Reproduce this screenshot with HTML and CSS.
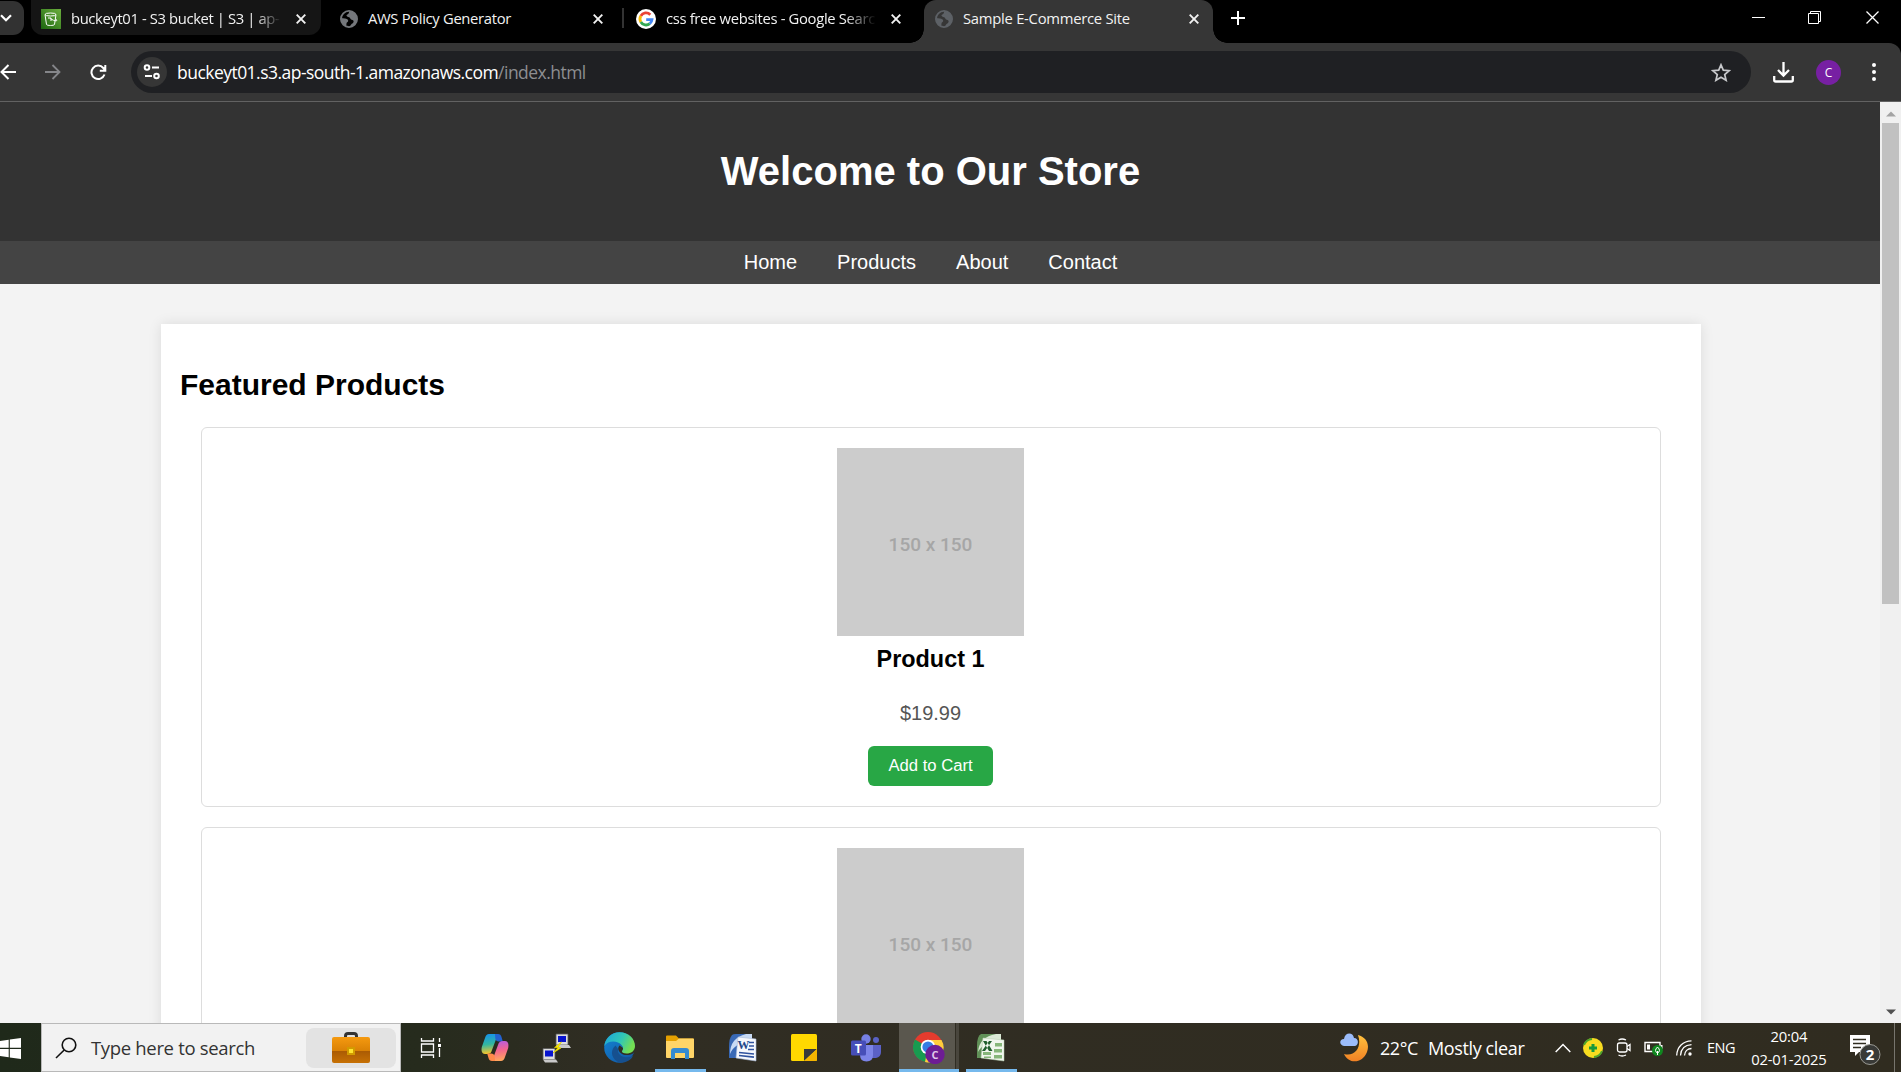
FILE: index.html
```html
<!DOCTYPE html>
<html lang="en">
<head>
<meta charset="utf-8">
<title>Sample E-Commerce Site</title>
<link rel="stylesheet" href="styles.css">
</head>
<body>
<svg class="defs" aria-hidden="true">
  <symbol id="close" viewBox="0 0 10 10"><path d="M.7.7l8.6 8.6M9.3.7L.7 9.3" stroke="currentColor" stroke-width="1.9" fill="none"/></symbol>
  <symbol id="globe" viewBox="0 0 18 18"><circle cx="9" cy="9" r="8.1" fill="none" stroke="currentColor" stroke-width="1.8"/><path d="M9.5 1c-1 1.5-.2 2.5-1.700 3.200S6 5.500 7.200 6.500 10 7 10.300 8.500s2.200 1 3 2 .2 2.500-1.800 3.500L9.500 17C14 17 17 13.500 17 9S14 1 9.500 1zM1 8l4 .5c1.500.2 3.500 1 3.200 2.500S6.500 12 6.500 13.500 6 16 6 16.500C3 15.500 1 12.500 1 8z" fill="currentColor"/></symbol>
</svg>
<div class="screen">
  <div class="tabs">
    <div class="tab-search"><svg width="12" height="8" viewBox="0 0 12 8"><path d="M1 1.300l5 5 5-5" fill="none" stroke="#fff" stroke-width="2.200"/></svg></div>
    <div class="tab tab-hover">
      <svg width="20" height="20" viewBox="0 0 20 20"><defs><linearGradient id="s3" x2="1" y1="1" y2="0"><stop stop-color="#1b660f"/><stop offset="1" stop-color="#6cae3e"/></linearGradient></defs><path fill="url(#s3)" d="M0 0h20v20H0z"/><g fill="none" stroke="#fff"><ellipse cx="9.500" cy="5.500" rx="5.500" ry="1.500"/><path d="M4 5.500l1.500 10c.6 1.300 7.400 1.300 8 0L15 5.500M9.500 9.500c2 1.500 4 2.500 6 2.300.8-.8-.3-1.500-1.200-1.800M7 9h3v3"/></g></svg>
      <span class="title t1">buckeyt01 - S3 bucket | S3 | ap-</span>
      <svg class="x"><use href="#close"/></svg>
    </div>
    <div class="tab tab-aws">
      <svg class="globe"><use href="#globe"/></svg>
      <span class="title t2">AWS Policy Generator</span>
      <svg class="x"><use href="#close"/></svg>
    </div>
    <i class="tab-divider"></i>
    <div class="tab tab-google">
      <svg width="20" height="20" viewBox="0 0 20 20"><circle cx="10" cy="10" r="10" fill="#fff"/><g fill="none" stroke-width="2.800"><path d="M14.300 5.700A6 6 0 0 0 4.800 7" stroke="#ea4335"/><path d="M4.800 7a6 6 0 0 0 0 6" stroke="#fbbc05"/><path d="M4.800 13a6 6 0 0 0 9 1.600" stroke="#34a853"/><path d="M13.800 14.600A6 6 0 0 0 16 10.600h-5.800" stroke="#4285f4"/></g></svg>
      <span class="title t3">css free websites - Google Searc</span>
      <svg class="x"><use href="#close"/></svg>
    </div>
    <div class="tab tab-active">
      <svg class="globe"><use href="#globe"/></svg>
      <span class="title t4">Sample E-Commerce Site</span>
      <svg class="x"><use href="#close"/></svg>
    </div>
    <svg class="plus" width="14" height="14" viewBox="0 0 14 14"><path d="M7 0v14M0 7h14" stroke="#fff" stroke-width="2"/></svg>
    <svg class="window-controls" width="128" height="14" viewBox="0 0 128 14" fill="none" stroke="#fff"><path d="M0 6.500h13M56.500 2.500h10v10h-10zM58.500 2.500v-2h10v10h-2"/><path d="M114.500.5l12 12M126.500.5l-12 12" stroke-width="1.300"/></svg>
  </div>
  <div class="toolbar">
    <svg width="17" height="16" viewBox="0 0 17 16" fill="none" stroke="#fff" stroke-width="2"><path d="M16 8H2M8.500 1L1.500 8l7 7"/></svg>
    <svg class="forward" width="16" height="16" viewBox="0 0 16 16" fill="none" stroke="#85868a" stroke-width="1.800"><path d="M0 8h14M7.500 1l7 7-7 7"/></svg>
    <svg class="reload" width="17" height="17" viewBox="0 0 17 17" fill="none" stroke="#fff" stroke-width="2"><path d="M14.500 10.500A6.700 6.700 0 1 1 13.300 4L15 6M15.300 1v5.700H9.800"/></svg>
    <div class="omnibox">
      <div class="site-info"><svg width="18" height="16" viewBox="0 0 18 16" fill="none" stroke="#fff" stroke-width="2"><circle cx="4" cy="3.500" r="2.300"/><path d="M9 3.500h7M2 12h7"/><circle cx="13.500" cy="12" r="2.300"/></svg></div>
      <span class="url">buckeyt01.s3.ap-south-1.amazonaws.com<span class="path">/index.html</span></span>
      <svg class="star" width="20" height="19" viewBox="0 0 20 19"><path d="M10 1.800l2.300 5.400 5.900.5-4.500 3.800 1.400 5.800-5.100-3.100-5.100 3.100 1.400-5.800L1.800 7.700l5.900-.5z" fill="none" stroke="#c7c8cb" stroke-width="1.700"/></svg>
    </div>
    <svg class="download" width="21" height="21" viewBox="0 0 21 21" fill="none" stroke="#fff" stroke-width="2.300"><path d="M10.500 0v13M5 8l5.500 5.500L16 8M1.200 14v4q0 1.500 1.500 1.500h15.600q1.500 0 1.500-1.500v-4"/></svg>
    <div class="avatar">C</div>
    <svg class="menu" width="4" height="18" viewBox="0 0 4 18" fill="#fff"><circle cx="2" cy="2" r="2"/><circle cx="2" cy="9" r="2"/><circle cx="2" cy="16" r="2"/></svg>
  </div>
  <div class="viewport">
    <div class="page">
      <header><h1>Welcome to Our Store</h1></header>
      <nav><a>Home</a><a>Products</a><a>About</a><a>Contact</a></nav>
      <main class="container">
        <h2>Featured Products</h2>
        <article class="card">
          <div class="image">150 x 150</div>
          <h3>Product 1</h3>
          <p class="price">$19.99</p>
          <button>Add to Cart</button>
        </article>
        <article class="card">
          <div class="image">150 x 150</div>
        </article>
      </main>
    </div>
    <div class="scrollbar">
      <svg width="10" height="6" viewBox="0 0 10 6"><path d="M0 5.500L5 .5l5 5z" fill="#a3a3a3"/></svg>
      <i class="thumb"></i>
      <svg class="down" width="10" height="6" viewBox="0 0 10 6"><path d="M0 .5l5 5 5-5z" fill="#505050"/></svg>
    </div>
  </div>
  <div class="taskbar">
    <div class="start"><svg width="21" height="21" viewBox="0 0 21 21" fill="#fff"><path d="M0 3l8.700-1.300v8.100H0zM9.800 1.500L21 0v9.800H9.800zM0 11h8.700v8.200L0 18zM9.800 11H21v10L9.800 19.400z"/></svg></div>
    <div class="search">
      <svg width="22" height="22" viewBox="0 0 22 22" fill="none" stroke="#111" stroke-width="1.600"><circle cx="14" cy="8" r="6.800"/><path d="M9.200 13L1 21"/></svg>
      <span>Type here to search</span>
      <div class="highlight"><svg width="38" height="32" viewBox="0 0 38 32"><defs><linearGradient id="case" x2="0" y2="1"><stop stop-color="#f59a10"/><stop offset=".52" stop-color="#db8205"/><stop offset=".54" stop-color="#aa5b04"/><stop offset="1" stop-color="#c77104"/></linearGradient></defs><path d="M13.500 6V4q0-2.500 2.500-2.500h6Q24.500 1.500 24.500 4v2" fill="none" stroke="#333" stroke-width="3"/><rect y="5" width="38" height="26" rx="2" fill="url(#case)"/><path fill="#d39b00" d="M15 15h8v8h-8z"/><path fill="#ffe32e" d="M17 17h4v4h-4z"/></svg></div>
    </div>
    <div class="apps">
      <div class="app"><svg width="22" height="20" viewBox="0 0 22 20" fill="none" stroke="#fff" stroke-width="1.300"><path d="M1.500 0v3h12V0M1.500 20v-3h12v3M1.500 6h12v8h-12zM19.500 0v4M19.500 10v9"/><path d="M18 6h3v3h-3z" fill="#fff" stroke="none"/></svg></div>
      <div class="app nudge"><svg width="28" height="27" viewBox="0 0 28 27"><defs><linearGradient id="cp1" x2=".1" y2="1"><stop stop-color="#1590ee"/><stop offset=".55" stop-color="#32b7a0"/><stop offset="1" stop-color="#f2c52e"/></linearGradient><linearGradient id="cp2" x2=".1" y2="1"><stop stop-color="#b45be6"/><stop offset=".5" stop-color="#f4668e"/><stop offset="1" stop-color="#ffa45e"/></linearGradient></defs><path d="M8 0h9L11 16c-1 3-2 4-5 4H4C1 20 0 17 .8 13L4 4c.8-2.500 2-4 4-4z" fill="url(#cp1)"/><path d="M14 0h3c2 0 3 1 3.500 3l1.300 4.500h-4c-2 0-3-1-3.500-3z" fill="#2361cf"/><path d="M20 27h-9l6-16c1-3 2-4 5-4h2c3 0 4 3 3.200 7L24 23c-.8 2.500-2 4-4 4z" fill="url(#cp2)"/><path d="M14 27h-3c-2 0-3-1-3.500-3l-1.300-4.500h4c2 0 3 1 3.500 3z" fill="#ff8a4a"/></svg></div>
      <div class="app nudge"><svg width="30" height="30" viewBox="0 0 30 30"><g id="pc"><path d="M14 1h12v11H14z" fill="#ddd" stroke="#555" stroke-width=".8"/><path d="M16 3h8v6h-8z" fill="#0713cd"/><path d="M14 12h13l2 3H16z" fill="#c9c9c9"/></g><use href="#pc" x="-13" y="14.500"/><path d="M19.500 9l-7 5.500 3.500.3-5 5.200 8-5-3-.7z" fill="#ffed00" stroke="#e3d100" stroke-width=".7"/></svg></div>
      <div class="app nudge"><svg width="31" height="31" viewBox="0 0 31 31"><defs><linearGradient id="e1" x2="1" y2=".4"><stop stop-color="#1ba4dd"/><stop offset=".6" stop-color="#31c8b5"/><stop offset="1" stop-color="#74de52"/></linearGradient><linearGradient id="e2" x2=".8" y2="1"><stop stop-color="#1286d8"/><stop offset="1" stop-color="#1358a2"/></linearGradient></defs><circle cx="15.500" cy="15.500" r="15.300" fill="url(#e2)"/><path d="M11.500 13.500C5 19 8 28 16 30.700 22 31 27 28 29 24c-6 3-16 1-15-7z" fill="#16508f"/><path d="M15.500 13.500c-2 2-1.500 5 .5 7 3 3 8 3.500 13 1l2-2v-4.500l-9 3z" fill="#302d24"/><path d="M.3 14C1.500 5.500 8 .2 15.500.2 25 .2 31 7 31 14c0 5-4 7.500-8.500 7.500-3 0-5-1-4.500-2.500 1.500-1.500 1.500-4-.5-6C14 8.500 4 8 .3 14z" fill="url(#e1)"/></svg></div>
      <div class="app running"><svg width="28" height="25" viewBox="0 0 28 25"><path d="M0 1.500Q0 .5 1 .5h9l3 3h14q1 0 1 1V22H0z" fill="#e5a000"/><path d="M0 6h10l3-2.500h14q1 0 1 1V22q0 1-1 1H1q-1 0-1-1z" fill="#ffd568"/><path d="M5 24v-8q0-3 3-3h12q3 0 3 3v8h-4v-6H9v6z" fill="#368bd0"/></svg></div>
      <div class="app"><svg width="29" height="29" viewBox="0 0 29 29"><path d="M4 2Q5 1 8 1h16v24H1V14Q1 5 4 2z" fill="#3969b5"/><path d="M2 21Q2 5 18 1h6v6Q6 10 2 21z" fill="#c8daf4"/><path d="M10 4l18 2v22L8 25z" fill="#f6f8fc" stroke="#a9bbd8" stroke-width=".6"/><path d="M21 9.500h5M21 13h5M20 16.500h6M11 19.500l15 1.500M11 22.500l15 1.700" stroke="#2f529e" stroke-width="1.700"/><text x="9.500" y="16" class="word-letter">W</text></svg></div>
      <div class="app"><svg width="26" height="27" viewBox="0 0 26 27"><rect width="26" height="27" rx="1.500" fill="#ffd800"/><path d="M13 15h13L13 27z" fill="#39393b"/><path d="M26 15v10.500q0 1.500-1.500 1.500H13z" fill="#f4b400"/></svg></div>
      <div class="app"><svg width="30" height="28" viewBox="0 0 30 28"><circle cx="15" cy="5" r="4.700" fill="#7680e4"/><circle cx="25" cy="6" r="3" fill="#5962c5"/><path d="M20 11h10v7q0 5-5 6h-5z" fill="#5b61c7"/><path d="M9 11h13v10q0 6.500-6.500 6.500T9 21z" fill="#7c84e8"/><rect y="6.500" width="15" height="15" rx="1.500" fill="#464eb8"/><text x="3.700" y="18.500" class="teams-letter">T</text></svg></div>
      <div class="app running selected"><svg width="32" height="32" viewBox="0 0 32 32"><circle cx="15" cy="15" r="15" fill="#e43b2e"/><path d="M15 15L2 7.500A15 15 0 0 0 13 30z" fill="#189b50"/><path d="M15 15l-3 15A15 15 0 0 0 28.500 8H15z" fill="#ffcd3c"/><circle cx="15" cy="15" r="7.300" fill="#fff"/><circle cx="15" cy="15" r="5.600" fill="#367de4"/><circle cx="22" cy="22.500" r="9.700" fill="#6d1d94"/><text x="22" y="26.500" text-anchor="middle" class="chrome-letter">C</text></svg></div>
      <div class="app running"><svg width="29" height="29" viewBox="0 0 29 29"><path d="M5 1h20v24H1V13Q1 3 5 1z" fill="#619158"/><path d="M2 19Q3 4 20 1h5v7Q7 9 2 19z" fill="#dbead6"/><path d="M7 5l21 2v21L5 25z" fill="#f0f6ed" stroke="#b4ceae" stroke-width=".5"/><path d="M19 10h7v3.500h-7zM18 16h8v3.500h-8zM7 19h8v3H7zM18 22h8v3.500h-8zM8 23.500h7V25H8z" fill="#86b67a"/><path d="M7 8h3.500l6 10H13zM16 8h-3L6 18h3z" fill="#205e2c"/></svg></div>
    </div>
    <div class="weather">
      <svg width="30" height="30" viewBox="0 0 30 30"><defs><linearGradient id="moon" x2="0" y2="1"><stop stop-color="#ffc13d"/><stop offset="1" stop-color="#f18124"/></linearGradient></defs><path d="M18 2c8 2 12 9 9 17C23 30 9 32 4 21c12 3 18-8 14-19z" fill="url(#moon)"/><path d="M4 13C-1 12-1 6 4 6 5-1 13-1 14 5c5 0 5 7 1 8z" fill="#9bbcfa"/></svg>
      <span class="temp">22°C</span><span class="sky">Mostly clear</span>
    </div>
    <div class="tray">
      <svg width="16" height="10" viewBox="0 0 16 10"><path d="M.7 9L8 1.500 15.300 9" fill="none" stroke="#fff" stroke-width="1.500"/></svg>
      <svg class="shield" width="20" height="20" viewBox="0 0 20 20"><circle cx="10" cy="10" r="10" fill="#f8dc20"/><path d="M1 7a9.500 9.500 0 0 1 8-6M19 13a9.500 9.500 0 0 1-8 6" fill="none" stroke="#4ea42c" stroke-width="2"/><path d="M10 6v8M6 10h8" stroke="#18983b" stroke-width="3"/></svg>
      <svg class="meet" width="16" height="19" viewBox="0 0 16 19" fill="none" stroke="#fff" stroke-width="1.300"><rect x="1.500" y="5" width="9.500" height="9" rx="2"/><path d="M11 8.500l3-2v6l-3-2M2.500 2Q6 0 10 2M2.500 17q3.500 2 7.500 0"/></svg>
      <svg class="battery" width="20" height="18" viewBox="0 0 20 18"><path d="M1 3.500h15v9H1z" fill="none" stroke="#fff" stroke-width="1.400"/><path d="M3 5.500h3v5H3zM17 6h1.500v4H17z" fill="#fff"/><circle cx="13.500" cy="11.500" r="5.500" fill="#10871f"/><path d="M13.500 8q-4 4 0 6 4-2 0-6zM13.500 12v4" fill="none" stroke="#fff"/></svg>
      <svg class="wifi" width="16" height="16" viewBox="0 0 16 16" fill="none" stroke="#fff" stroke-width="1.300"><path d="M.7 15.500C1 7 7 1 15.500.8M4.500 15.500C5 9 9 5 15.500 4.700M8.500 15.500c.3-4 3-7 7-7"/><circle cx="14" cy="14" r="1.700" fill="#fff" stroke="none"/></svg>
      <span class="lang">ENG</span>
      <div class="clock"><span>20:04</span><span class="date">02-01-2025</span></div>
      <svg class="notice" width="31" height="31" viewBox="0 0 31 31"><path d="M0 0h20v17H9l-4 4v-4H0z" fill="#fff"/><path d="M3 4.500h13M3 8.500h13M3 12.500h8" stroke="#302d20" stroke-width="1.400"/><circle cx="20" cy="19.500" r="10" fill="#393a37" stroke="#9a9a94"/><text x="20" y="25" text-anchor="middle" class="count">2</text></svg>
      <i class="peek"></i>
    </div>
  </div>
</div>
</body>
</html>
```
FILE: styles.css
```css
* { box-sizing: border-box; }
body { margin: 0; font-family: "Open Sans", "Noto Sans", sans-serif; }
svg { display: block; flex: none; }
.defs { position: absolute; width: 0; height: 0; }
.screen { width: 1901px; height: 1072px; display: flex; flex-direction: column; overflow: hidden; background: #000; }

.tabs { height: 43px; display: flex; align-items: flex-start; flex: none; color: #f2f2f2; }
.tab-search { width: 24px; height: 34px; margin-top: 1px; background: #323232; border-radius: 0 11px 11px 0; display: flex; align-items: center; }
.tab { height: 35px; display: flex; align-items: center; padding-top: 2px; }
.tab-hover { width: 290px; margin-left: 7px; padding-left: 10px; background: #151515; border-radius: 0 0 12px 12px; }
.tab-aws { width: 301px; padding-left: 19px; }
.tab-google { width: 300px; padding-left: 12px; }
.tab-divider { width: 2px; height: 20px; margin-top: 8px; background: #333; }
.tab-active { width: 289px; height: 43px; padding: 2px 0 8px 11px; background: #363636; border-radius: 12px 12px 0 0; position: relative; }
.tab-active::before, .tab-active::after { content: ""; position: absolute; bottom: 0; width: 14px; height: 14px; }
.tab-active::before { left: -14px; background: radial-gradient(circle at 0 0, transparent 13.500px, #363636 14px); }
.tab-active::after { right: -14px; background: radial-gradient(circle at 100% 0, transparent 13.500px, #363636 14px); }
.title { font-size: 14.800px; line-height: 20px; letter-spacing: -.33px; white-space: nowrap; flex: none; margin-left: 10px; padding-bottom: 2px; }
.t1 { width: 210px; letter-spacing: -.38px; -webkit-mask-image: linear-gradient(90deg, #000 88%, transparent); }
.t2 { width: 220px; }
.t3 { width: 210px; -webkit-mask-image: linear-gradient(90deg, #000 85%, transparent); }
.t4 { width: 220px; letter-spacing: -.26px; }
.x { width: 10px; height: 10px; margin-left: 15px; }
.tab-aws .x { margin-left: 5px; }
.tab-active .x { margin-left: 6px; }
.globe { width: 18px; height: 18px; color: #74777b; }
.tab-active .globe { color: #5d6166; }
.plus { margin: 11px 0 0 18px; }
.window-controls { margin: 11px 21px 0 auto; }

.toolbar { height: 59px; flex: none; display: flex; align-items: center; background: #363636; border-bottom: 1px solid #626262; border-radius: 0 12px 0 0; }
.forward { margin-left: 28px; }
.reload { margin-left: 29px; }
.omnibox { width: 1620px; height: 42px; margin-left: 24px; border-radius: 21px; background: #1f2023; display: flex; align-items: center; padding: 0 20px 0 6px; }
.site-info { width: 30px; height: 30px; border-radius: 50%; background: #363636; display: flex; align-items: center; justify-content: center; }
.url { margin-left: 10px; color: #fff; font-size: 17.500px; letter-spacing: -.53px; }
.path { color: #8d8e91; }
.star { margin-left: auto; }
.download { margin-left: 22px; }
.avatar { width: 25px; height: 25px; margin-left: 22px; border-radius: 50%; background: #7720a3; color: #fff; font-size: 12px; display: flex; align-items: center; justify-content: center; }
.menu { margin-left: 31px; }

.viewport { height: 921px; flex: none; display: flex; font-family: "Liberation Sans", Arial, sans-serif; overflow: hidden; }
.page { width: 1880px; background: #f3f3f3; overflow: hidden; }
header { height: 139px; background: #333; color: #fff; padding: 46px 19px 0 0; text-align: center; }
h1 { margin: 0; font-size: 40px; line-height: 46px; }
nav { height: 43px; background: #444; color: #fff; font-size: 20px; display: flex; justify-content: center; gap: 40px; padding: 10px 19px 0 0; line-height: 23px; }
.container { width: 1540px; height: 1100px; margin: 40px 0 0 161px; padding: 43px 20px 0 19px; background: #fff; box-shadow: 0 0 12.500px rgba(0,0,0,.1); }
h2 { margin: 0 0 25px; font-size: 30px; line-height: 35px; }
.card { height: 380px; margin: 0 20px 20px 21px; padding: 20px 1px 0 0; border: 1px solid #ddd; border-radius: 6px; display: flex; flex-direction: column; align-items: center; }
.image { width: 187px; height: 188px; background: #ccc; color: #a6a6a6; font: 500 19px Roboto, "Liberation Sans", sans-serif; display: flex; align-items: center; justify-content: center; padding-top: 4px; }
h3 { margin: 10px 0 0; font-size: 23.400px; line-height: 27px; }
.price { margin: 29px 0 0; font-size: 20px; line-height: 23px; color: #555; }
button { width: 125px; height: 40px; margin-top: 21px; border: 0; border-radius: 6px; background: #28a745; color: #fff; font: 16.667px "Liberation Sans", Arial, sans-serif; }
.scrollbar { width: 21px; background: #f0f0f0; display: flex; flex-direction: column; align-items: center; padding: 9px 0 8px; }
.thumb { width: 17px; height: 481px; margin-top: 6px; background: #c1c1c1; }
.down { margin-top: auto; }

.taskbar { height: 49px; flex: none; display: flex; background: linear-gradient(90deg, #1f291a, #262b1d 22%, #302d23 32%, #302c20); color: #fff; }
.start { width: 41px; padding-top: 15px; }
.search { width: 360px; height: 49px; background: #f2f2f2; border: 1px solid #b9b9b9; display: flex; align-items: center; padding-left: 13px; color: #333; font-size: 18.500px; letter-spacing: -.33px; }
.search span { margin-left: 14px; width: 215px; white-space: nowrap; }
.highlight { width: 90px; height: 40px; border-radius: 8px; background: #e3e3e3; display: flex; justify-content: center; align-items: center; }
.apps { display: flex; margin-left: -1px; }
.app { width: 62.200px; height: 49px; display: flex; align-items: center; justify-content: center; position: relative; }
.nudge { padding-left: 3px; }
.running::after { content: ""; position: absolute; bottom: 0; left: 6px; width: 51px; height: 3px; background: #76b9ed; }
.selected { background: linear-gradient(90deg, transparent 0, transparent 1px, #5a574e 1px, #5a574e 57px, #302d23 57px, #302d23 58px, #49463d 58px, #49463d 61px, transparent 61px); }
.selected::after { left: 1px; width: 60px; }
.word-letter { font: bold 12px "Liberation Serif", serif; fill: #234789; }
.teams-letter { font: bold 12px "Open Sans", sans-serif; fill: #fff; }
.chrome-letter { font: bold 11px "Open Sans", sans-serif; fill: #e0c8ea; }
.weather { display: flex; align-items: center; margin-left: 318px; font-size: 18px; letter-spacing: -.36px; }
.temp { margin-left: 10px; width: 48px; }
.sky { width: 127px; white-space: nowrap; }
.tray { display: flex; align-items: center; flex: 1; }
.shield { margin-left: 12px; }
.meet { margin-left: 13px; }
.battery { margin-left: 12px; }
.wifi { margin-left: 12px; }
.lang { margin-left: 15px; width: 43px; font-size: 14.500px; letter-spacing: -.4px; }
.clock { width: 78px; display: flex; flex-direction: column; align-items: center; font-size: 14.800px; line-height: 23px; letter-spacing: -.2px; white-space: nowrap; }
.notice { margin: 5px 0 0 22px; }
.count { font: bold 15px "Open Sans", sans-serif; fill: #fff; }
.peek { width: 1px; height: 49px; margin-left: 13px; background: #77756e; }
```
